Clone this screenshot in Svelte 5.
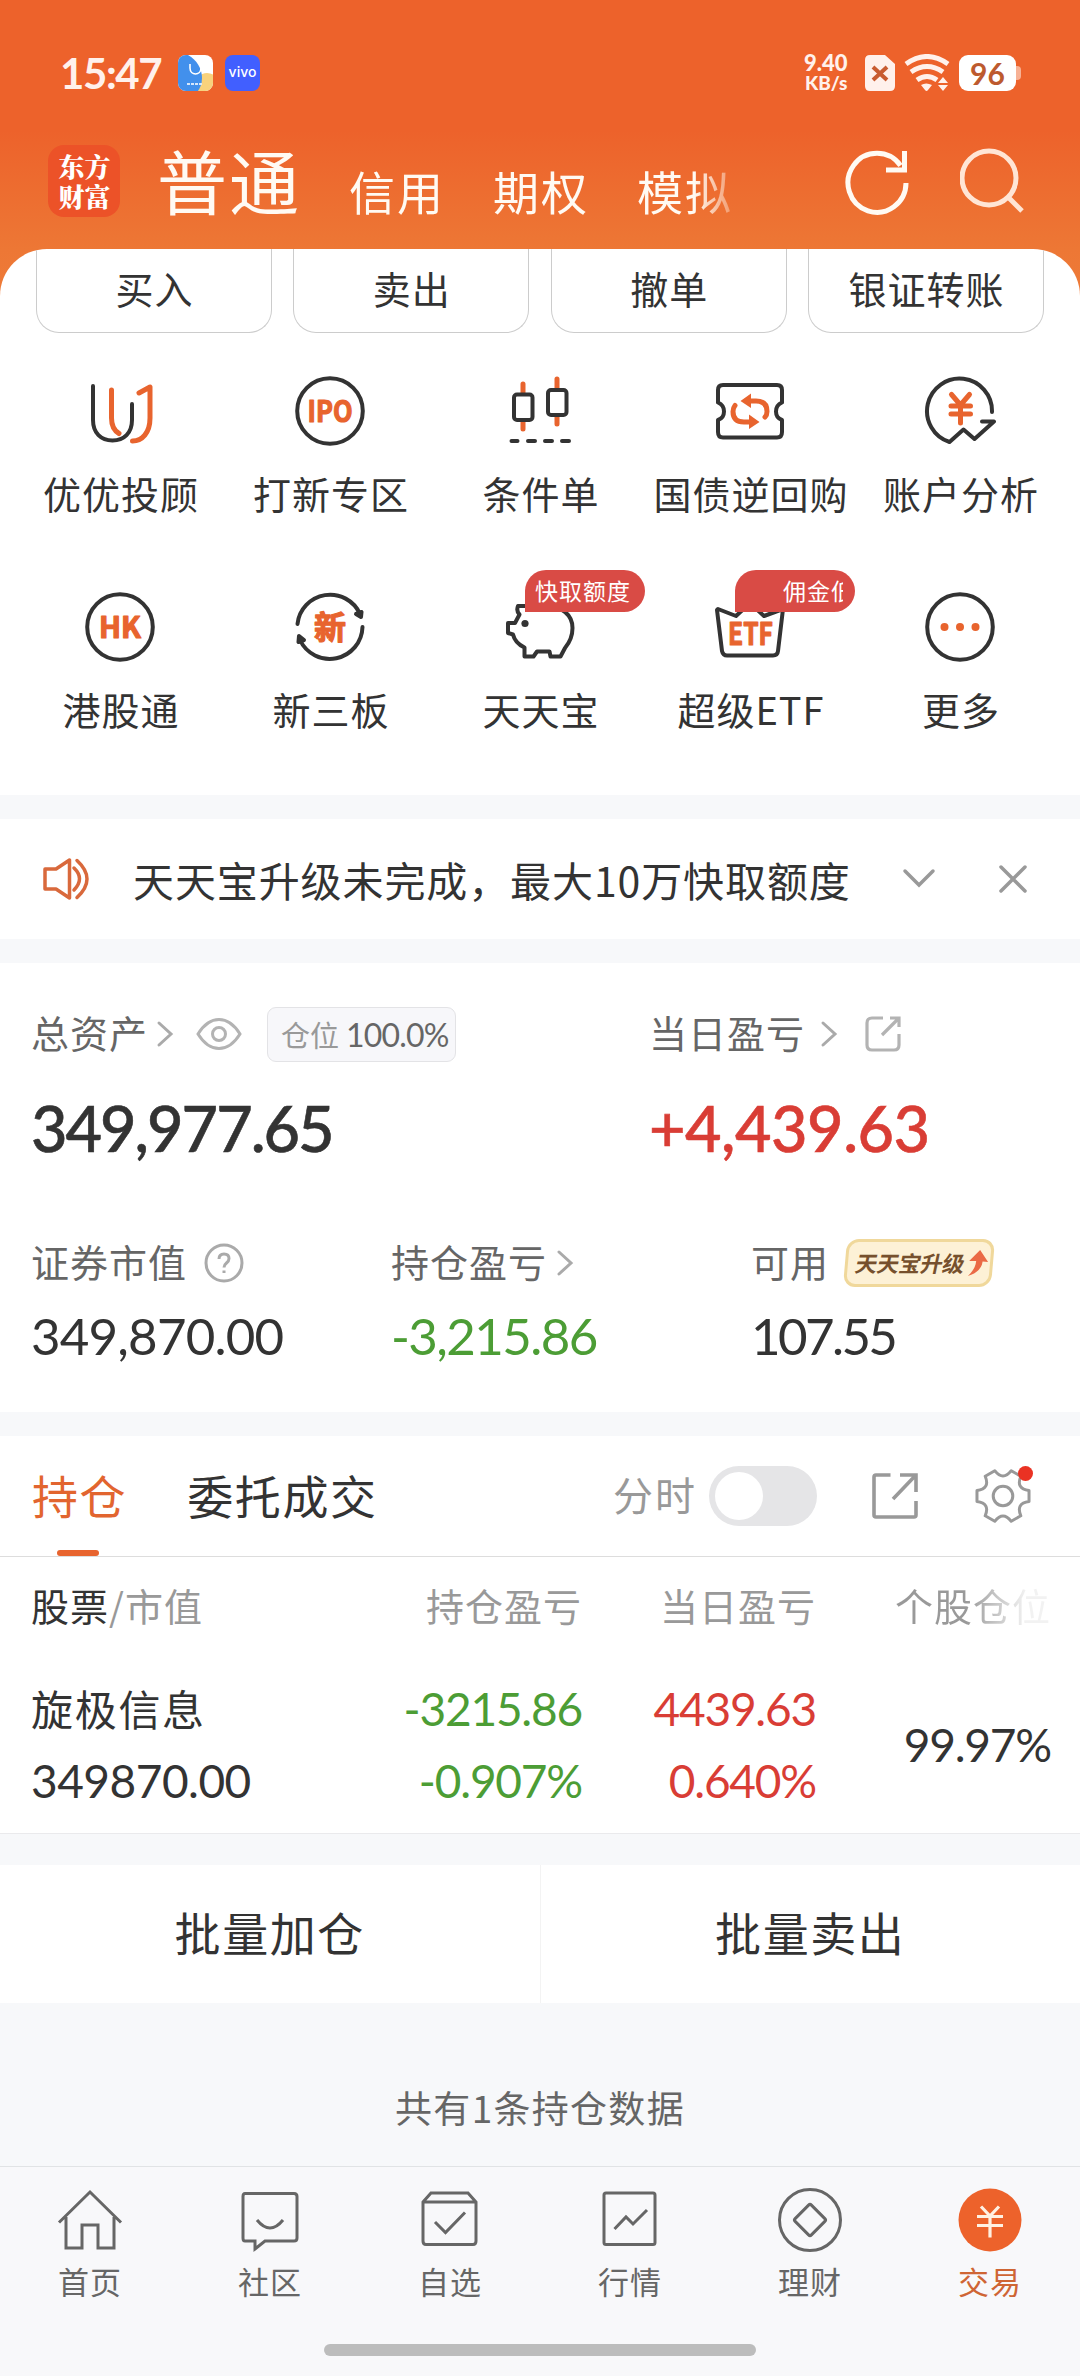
<script>
  const accounts = ['信用', '期权', '模拟'];
  const actions = ['买入', '卖出', '撤单', '银证转账'];

  const shortcuts = [
    { icon: 'youyou', label: '优优投顾' },
    { icon: 'ipo', label: '打新专区' },
    { icon: 'candle', label: '条件单' },
    { icon: 'repo', label: '国债逆回购' },
    { icon: 'analysis', label: '账户分析' },
    { icon: 'hk', label: '港股通' },
    { icon: 'neeq', label: '新三板' },
    { icon: 'pig', label: '天天宝', badge: '快取额度' },
    { icon: 'etf', label: '超级ETF', badge: '佣金低', scrolling: true },
    { icon: 'more', label: '更多' }
  ];

  const navItems = [
    { icon: 'home', label: '首页' },
    { icon: 'chat', label: '社区' },
    { icon: 'box', label: '自选' },
    { icon: 'quote', label: '行情' },
    { icon: 'wealth', label: '理财' },
    { icon: 'trade', label: '交易' }
  ];

  let intraday = $state(false);
  let active = $state('trade');

  function polar(r, deg) {
    const a = (deg * Math.PI) / 180;
    return `${(28 + r * Math.cos(a)).toFixed(2)} ${(28 + r * Math.sin(a)).toFixed(2)}`;
  }

  // six-lobed gear outline
  const gear = [0, 60, 120, 180, 240, 300]
    .map((d, i) => `${i ? 'L' : 'M'}${polar(26.6, d - 12)}L${polar(26.6, d + 12)}Q${polar(14.5, d + 30)} ${polar(26.6, d + 48)}`)
    .join('') + 'Z';
</script>

{#snippet chevron()}
  <svg class="chev" width="18" height="28" viewBox="0 0 18 28"><path d="M3 3l12 11L3 25" /></svg>
{/snippet}

<div class="app">
  <header>
    <div class="status">
      <span class="time">15:47</span>
      <svg class="app-ico" width="35" height="36" viewBox="0 0 35 36">
        <clipPath id="r"><rect width="35" height="36" rx="8" /></clipPath>
        <g clip-path="url(#r)">
          <rect width="35" height="36" fill="#fff" />
          <circle cx="29" cy="30" r="12" fill="#f8d27c" />
          <path d="M0 0H10C19 5 24 14 24 23C24 29 22 33 20 36H0Z" fill="#4290ec" />
          <path d="M12 9v4c0 8 11 8 11 0V9" fill="none" stroke="#fff" stroke-width="1.6" />
          <path d="M9 29h15" stroke="#d6e7fb" stroke-width="2" stroke-dasharray="3 1" />
        </g>
      </svg>
      <span class="vivo">vivo</span>
      <span class="speed">9.40<small>KB/s</small></span>
      <svg class="sim" width="30" height="36" viewBox="0 0 30 36">
        <path d="M5 0H20L30 9V31Q30 36 25 36H5Q0 36 0 31V5Q0 0 5 0Z" fill="#fff1ec" />
        <path d="M8 12l14 13M22 12L8 25" stroke="#c85c31" stroke-width="4" />
      </svg>
      <svg class="wifi" width="46" height="38" viewBox="0 0 46 38">
        <g fill="none" stroke="#fff1ec" stroke-width="5">
          <path d="M2 10Q23 -5 44 10" /><path d="M7 18Q23 7 39 18" /><path d="M13 26Q23 19 33 26" />
        </g>
        <path d="M17 31Q22 28 28 31L24 36Q22.500 38 21 36Z" fill="#fff1ec" />
        <path d="M34 29l5-6 5 6zM34 31l5 6 5-6z" fill="#fff1ec" />
      </svg>
      <span class="battery">96</span><i class="nub"></i>
    </div>
    <div class="head-row">
      <div class="logo"><span>东方</span><span>财富</span></div>
      <div class="accounts">
        <b>普通</b>
        {#each accounts as a}<span>{a}</span>{/each}
      </div>
      <svg class="refresh" width="66" height="68" viewBox="0 0 66 68"><path d="M62 36A29 29.500 0 1 1 56.500 18.500M60.500 4V23H42" /></svg>
      <svg class="search" width="66" height="68" viewBox="0 0 66 68"><circle cx="29" cy="31" r="27" /><path d="M48 50l14 14" /></svg>
    </div>
  </header>

  <div class="panel-wrap">
    <section class="panel">
      <div class="actions">
        {#each actions as a}<button>{a}</button>{/each}
      </div>
      <div class="grid">
        {#each shortcuts as s}
          <div class="cell">
            <svg class="ico" width="72" height="72" viewBox="0 0 72 72">
              {#if s.icon === 'youyou'}
                <path d="M9 11V45C9 58 17 65.500 28.500 65.500S48 58 48 45V29" />
                <path class="o" d="M27.500 15V43Q27.500 54 35 58.500M55 18L66 12V43C66 58 58 66 48.500 66" />
              {:else if s.icon === 'ipo'}
                <circle cx="36" cy="36" r="32.800" /><text x="36" y="47" textLength="45" lengthAdjust="spacingAndGlyphs" font-size="29">IPO</text>
              {:else if s.icon === 'candle'}
                <path class="o" d="M19 9V18M19 46V54M53 4V14M53 41V49" />
                <rect x="10" y="19.500" width="18.500" height="25.500" rx="3" /><rect x="44" y="15" width="18.500" height="25" rx="3" />
                <path d="M7.500 66h6M24 66h7M41 66h7M58 66h7" />
              {:else if s.icon === 'repo'}
                <path d="M9 10H63Q68 10 68 15V27.500Q62 30 62 36.500T68 45V57Q68 62.500 63 62.500H9Q4 62.500 4 57V45Q10 43 10 36.500T4 27.500V15Q4 10 9 10Z" />
                <path class="o" d="M34 26H42Q53 26 53 36.500Q53 40 51 42M38 47H30Q19 47 19 36.500Q19 33 21 30.500" />
                <path class="of" d="M26.500 26L37 18.500V33ZM45.500 47L35 39.500V54Z" />
              {:else if s.icon === 'analysis'}
                <path d="M68 37A32.500 32.500 0 1 0 25.500 67L39.500 54.500L50.500 64L70 46.500H58" />
                <path class="o" d="M27.500 19.500L36.500 30L45.500 19.500M36.500 31V48M27 31H46.500M27 39H46.500" />
              {:else if s.icon === 'hk'}
                <circle cx="36" cy="36" r="32.800" /><text x="36" y="47" textLength="42" lengthAdjust="spacingAndGlyphs" font-size="29">HK</text>
              {:else if s.icon === 'neeq'}
                <path d="M3.500 33A32.800 32.800 0 0 1 66 23M68.500 36A32.800 32.800 0 0 1 6 49" />
                <path d="M62 23L67.500 21L67 26ZM10 49L4.500 51L5 45Z" fill="#333" />
                <text x="36" y="47.500" font-size="32">新</text>
              {:else if s.icon === 'pig'}
                <path d="M24 15H14Q12 20 15.500 23.500L11 32H4V42L9 43.500Q11 52 20.500 56.500V65.500H29.500L33 60.500H45.500L46.500 65.500H56.500L61 57Q68.500 48 68.500 37C68.500 24 58 15 42 15Z" />
                <circle class="kf" cx="21" cy="32.500" r="3.600" />
              {:else if s.icon === 'etf'}
                <path d="M4 18L22 25L36 12L50 25L69 18L64 60Q63.500 64.500 59 64.500H13Q9 64.500 8 60L3 19Z" />
                <text x="36.500" y="53.500" textLength="45" lengthAdjust="spacingAndGlyphs" font-size="31">ETF</text>
              {:else}
                <circle cx="36" cy="36" r="32.800" />
                <g class="of"><circle cx="20.500" cy="36" r="4" /><circle cx="36" cy="36" r="4" /><circle cx="51.500" cy="36" r="4" /></g>
              {/if}
            </svg>
            <span class="label">{s.label}</span>
            {#if s.badge}<div class="badge"><span class:scrolling={s.scrolling}>{s.badge}</span></div>{/if}
          </div>
        {/each}
      </div>
    </section>
  </div>

  <section class="notice">
    <svg class="speaker" width="48" height="44" viewBox="0 0 48 44"><path d="M2 12H13L26.500 3V41L13 32H2ZM31 11Q42 21.500 31 33M34 3.500Q54 22 34 40.500" /></svg>
    <span class="notice-text">天天宝升级未完成，最大10万快取额度</span>
    <svg class="gray down" width="34" height="22" viewBox="0 0 34 22"><path d="M3 3l14 14L31 3" /></svg>
    <svg class="gray" width="28" height="30" viewBox="0 0 28 30"><path d="M2 3l24 24M26 3L2 27" /></svg>
  </section>

  <section class="assets">
    <div class="top">
      <div class="total">
        <div class="line">
          <span>总资产</span>{@render chevron()}
          <svg class="eye" width="46" height="34" viewBox="0 0 46 34"><path d="M2 17Q11 2.500 23 2.500T44 17Q35 31.500 23 31.500T2 17Z" /><circle cx="23" cy="17" r="6.500" /></svg>
          <div class="chip"><em>仓位</em>100.0%</div>
        </div>
        <div class="big">349,977.65</div>
      </div>
      <div>
        <div class="line">
          <span>当日盈亏</span>{@render chevron()}
          <svg class="share-sm" width="36" height="36" viewBox="0 0 36 36"><path d="M18 2H7Q2 2 2 7V29Q2 34 7 34H29Q34 34 34 29V18M25 2H34V11M33 3L17 19" /></svg>
        </div>
        <div class="big up">+4,439.63</div>
      </div>
    </div>
    <div class="sub">
      <div>
        <div class="line"><span>证券市值</span>
          <svg class="help" width="40" height="40" viewBox="0 0 40 40"><circle cx="20" cy="20" r="18" /><path d="M15 16Q15 11 20 11T25 15.500Q25 18 22.500 20T20 24.500M20 27.500V30" /></svg>
        </div>
        <div class="mid">349,870.00</div>
      </div>
      <div>
        <div class="line"><span>持仓盈亏</span>{@render chevron()}</div>
        <div class="mid tight down-c">-3,215.86</div>
      </div>
      <div>
        <div class="line"><span>可用</span>
          <div class="promo"><b>天天宝升级</b>
            <svg width="20" height="26" viewBox="0 0 20 26"><path d="M11 0L20 12L14.500 11.500Q14 22 1 26Q8 19 8 11L1 11Z" fill="#ea6a46" /></svg>
          </div>
        </div>
        <div class="mid tighter">107.55</div>
      </div>
    </div>
  </section>

  <section class="holdings">
    <div class="tabs">
      <span class="tab on">持仓</span>
      <span class="tab">委托成交</span>
      <span class="min">分时</span>
      <button class="toggle" class:checked={intraday} aria-label="分时" onclick={() => intraday = !intraday}></button>
      <svg class="share" width="48" height="48" viewBox="0 0 48 48"><path d="M19.500 3H5Q3 3 3 5V43Q3 45 5 45H43Q45 45 45 43V29M29 3H45V20M44 4L22 27" /></svg>
      <div class="gear">
        <svg width="56" height="56" viewBox="0 0 56 56"><path d={gear} /><circle cx="28" cy="28" r="9.800" /></svg>
        <i></i>
      </div>
    </div>
    <div class="row th">
      <span class="left"><em>股票</em>/市值</span><span>持仓盈亏</span><span>当日盈亏</span><span class="fade">个股仓位</span>
    </div>
    <div class="row td">
      <div class="left"><p class="name">旋极信息</p><p>349870.00</p></div>
      <div class="down-c"><p>-3215.86</p><p>-0.907%</p></div>
      <div class="up"><p>4439.63</p><p>0.640%</p></div>
      <div><p>99.97%</p></div>
    </div>
  </section>

  <div class="batch"><button>批量加仓</button><button>批量卖出</button></div>
  <div class="count">共有1条持仓数据</div>

  <nav>
    <div class="nav-items">
      {#each navItems as n}
        <button class="nav-item" class:active={active === n.icon} onclick={() => active = n.icon}>
          <svg width="66" height="66" viewBox="0 0 66 66">
            {#if n.icon === 'home'}
              <path d="M2 34.500L33 4L64 34.500M9 29V60H25V37H41V60H57V29" />
            {:else if n.icon === 'chat'}
              <path d="M8 5.500H57Q60 5.500 60 8.500V50Q60 53 57 53H28L18 61V53H8Q6 53 6 50V8.500Q6 5.500 8 5.500ZM20 32Q33 48 46 32" />
            {:else if n.icon === 'box'}
              <path d="M6 14L14 5H51L59 14V53Q59 56.500 56 56.500H9Q6 56.500 6 53ZM6 14H59M18 34L28.500 44.500L48 24.500" />
            {:else if n.icon === 'quote'}
              <rect x="7" y="5" width="51" height="51.500" rx="2" /><path d="M17.500 41L29 29L36 36L50 22" />
            {:else if n.icon === 'wealth'}
              <circle cx="33" cy="32" r="30.500" /><rect x="21.500" y="20.500" width="23" height="23" rx="2" transform="rotate(45 33 32)" />
            {:else}
              <circle cx="33" cy="32" r="31.500" fill="#ed622b" stroke="none" />
              <path class="yen" d="M24 18.500L33 28L42 18.500M33 28V49.500M20 28.500H46M20 37.500H46" />
            {/if}
          </svg>
          <span>{n.label}</span>
        </button>
      {/each}
    </div>
    <div class="home-bar"></div>
  </nav>
</div>

<style>
  :global(body) { margin: 0; background: #f7f8fa; }
  .app { width: 1080px; height: 2376px; overflow: hidden; display: flex; flex-direction: column; background: #f7f8fa; color: #333; font-family: "Noto Sans CJK SC", sans-serif; font-size: 38px; letter-spacing: 1px; font-weight: 400; }
  .app > * { flex-shrink: 0; box-sizing: border-box; }
  button { font: inherit; letter-spacing: inherit; color: inherit; background: none; border: none; padding: 0; }
  svg { display: block; flex-shrink: 0; fill: none; }
  p { margin: 0; }
  .up { color: #d93d35; }
  .down-c { color: #4c9d35; }

  header { height: 249px; background: linear-gradient(#ed622b 0, #ed622b 130px, #ed7735 249px); color: #fffaf3; }
  .status { display: flex; align-items: center; height: 36px; padding: 55px 60px 0; }
  .time { width: 118px; font: 700 42px/36px Lato, sans-serif; letter-spacing: -1.4px; color: #fff1ec; }
  .vivo { width: 35px; height: 36px; margin-left: 12px; border-radius: 8px; background: #415fff; color: #fff; font: 500 14px/34px Inter, sans-serif; letter-spacing: 0; text-align: center; }
  .speed { width: 60px; margin-left: auto; margin-right: 1px; text-align: left; font: 900 22px/20px Lato, sans-serif; letter-spacing: 0; color: #fff1ec; }
  .speed small { display: block; font-size: 19px; font-weight: 900; padding-left: 1px; }
  .wifi { margin: 0 9px; }
  .battery { width: 57px; height: 36px; border-radius: 9px; background: #fff; color: #bd5a2e; font: 700 30px/36px Lato, sans-serif; letter-spacing: 0; text-align: center; }
  .nub { width: 5px; height: 14px; background: #f7b195; border-radius: 0 4px 4px 0; margin-right: -1px; }
  .head-row { display: flex; align-items: flex-start; padding: 54px 54px 0 48px; }
  .logo { width: 72px; height: 72px; box-sizing: border-box; padding: 6px 0 0 1px; border-radius: 16px; background: #ec5228; color: #fff; display: flex; flex-direction: column; align-items: center; font: 900 26px/30px "Noto Serif CJK SC", "Noto Sans CJK SC", serif; letter-spacing: 0; }
  .accounts { width: 640px; height: 90px; margin-left: 37px; display: flex; align-items: baseline; white-space: nowrap; -webkit-mask-image: linear-gradient(90deg, #000 537px, transparent 592px); mask-image: linear-gradient(90deg, #000 537px, transparent 592px); }
  .accounts b { font-weight: 400; font-size: 70px; line-height: 70px; letter-spacing: 2px; width: 143px; }
  .accounts span { font-size: 46px; line-height: 68px; letter-spacing: 2px; width: 96px; margin-left: 48px; }
  .accounts b + span { margin-left: 49px; }
  .refresh { margin-left: 47px; margin-top: 2px; stroke: #fffaf3; stroke-width: 5; }
  .search { margin-left: auto; margin-top: 2px; stroke: #ffe5d5; stroke-width: 5; }

  .panel-wrap { background: linear-gradient(#ed7735, #ee7b38 50px, #fff 50px); }
  .panel { height: 546px; background: #fff; border-radius: 47px 47px 0 0; overflow: hidden; }
  .actions { display: grid; grid-template-columns: repeat(4, 236px); justify-content: space-between; padding: 0 36px; }
  .actions button { height: 84px; box-sizing: border-box; border: 1px solid #ccc; border-top: none; border-radius: 0 0 23px 23px; padding: 0 0 5px 1px; line-height: 70px; }
  .grid { display: grid; grid-template-columns: repeat(5, 210px); grid-template-rows: 216px 204px; padding: 42px 15px 0; }
  .cell { position: relative; display: flex; flex-direction: column; align-items: center; }
  .ico { stroke: #333; stroke-width: 4; stroke-linecap: round; stroke-linejoin: round; }
  .ico .o { stroke: #e8642e; stroke-width: 5; }
  .ico .of { fill: #e8642e; stroke: none; }
  .ico .kf { fill: #333; stroke: none; }
  .ico text { fill: #e8642e; stroke: #e8642e; stroke-width: 1.2; font-family: "Noto Sans CJK SC", sans-serif; font-weight: 700; text-anchor: middle; letter-spacing: 0; }
  .label { margin: 22px 0 0 2px; line-height: 48px; white-space: nowrap; }
  .badge { position: absolute; left: 90px; top: -21px; width: 120px; height: 42px; box-sizing: border-box; padding: 0 12px 0 10px; border-radius: 21px 21px 21px 0; background: #d94b45; color: #fff; font-size: 23px; line-height: 40px; letter-spacing: 1px; white-space: nowrap; }
  .badge span { display: block; overflow: hidden; }
  .badge .scrolling { padding-left: 38px; }

  .notice { height: 120px; margin: 24px 0; padding: 0 53px 0 43px; background: #fff; display: flex; align-items: center; }
  .speaker { stroke: #d9693c; stroke-width: 3.5; stroke-linejoin: round; stroke-linecap: round; }
  .notice-text { margin-left: 42px; width: 769px; font-size: 41px; line-height: 60px; letter-spacing: 0.9px; white-space: nowrap; }
  .gray { stroke: #999; stroke-width: 3.5; stroke-linecap: round; }
  .gray.down { margin-right: auto; }

  .assets { height: 449px; padding: 41px 0 0 31px; background: #fff; }
  .line { display: flex; align-items: center; height: 60px; color: #666; white-space: nowrap; }
  .line span { line-height: 56px; height: 60px; }
  .chev { stroke: #aaa; stroke-width: 3; stroke-linecap: round; margin-left: 8px; }
  .eye { stroke: #b3b3b3; stroke-width: 3; margin-left: 22px; }
  .chip { height: 55px; width: 189px; box-sizing: border-box; margin-left: 25px; padding-left: 13px; border: 1px solid #e3e3e6; border-radius: 9px; background: #f7f7fa; font: 400 32px/53px Lato, sans-serif; letter-spacing: -0.8px; }
  .chip em { font: 400 29px/51px "Noto Sans CJK SC", sans-serif; letter-spacing: 0; color: #999; margin-right: 7px; }
  .share-sm { stroke: #b3b3b3; stroke-width: 3.2; margin-left: 27px; }
  .top { display: flex; }
  .total { width: 618px; }
  .top > div:last-child .chev { margin-left: 15px; }
  .big { font: 500 63px/76px Lato, sans-serif; letter-spacing: -2px; margin-top: 26px; -webkit-text-stroke: 0.6px currentColor; }
  .big.up { letter-spacing: -0.5px; }
  .sub { display: grid; grid-template-columns: 360px 360px 1fr; margin-top: 67px; }
  .sub .chev { margin-left: 9px; }
  .help { stroke: #aaa; stroke-width: 3; margin-left: 17px; }
  .mid { font: 400 51px/60px Lato, sans-serif; letter-spacing: -0.8px; margin-top: 13px; }
  .mid.tight { letter-spacing: -1.6px; }
  .mid.tighter { letter-spacing: -2.6px; }
  .promo { display: flex; align-items: center; height: 48px; width: 148px; box-sizing: border-box; padding-left: 8px; margin-left: 16px; border: 3px solid #f0d89b; border-radius: 12px; background: #fdf1d6; transform: skewX(-5deg); color: #76502d; font-size: 22px; letter-spacing: -0.3px; }
  .promo b { transform: skewX(-7deg); line-height: 40px; padding-bottom: 2px; }
  .promo svg { margin-left: 3px; }

  .holdings { height: 398px; margin-top: 24px; background: #fff; border-bottom: 1px solid #eaeaec; }
  .tabs { height: 121px; box-sizing: border-box; display: flex; align-items: center; padding: 0 49px 0 32px; border-bottom: 1px solid #ddd; }
  .tab { position: relative; height: 120px; font-size: 46px; line-height: 116px; letter-spacing: 1.6px; }
  .tab + .tab { margin-left: 60px; }
  .tab.on { color: #e2652f; }
  .tab.on::after { content: ''; position: absolute; left: 25px; bottom: 0; width: 42px; height: 6px; border-radius: 3px; background: #e8642e; }
  .min { margin-left: auto; margin-right: 12px; height: 120px; font-size: 40px; line-height: 117px; letter-spacing: 2px; color: #999; }
  .toggle { width: 108px; height: 60px; border-radius: 30px; background: #e5e5e7; padding: 6px; }
  .toggle::before { content: ''; display: block; width: 48px; height: 48px; border-radius: 50%; background: #fff; }
  .toggle.checked { background: #e8642e; }
  .toggle.checked::before { margin-left: auto; }
  .share { stroke: #999; stroke-width: 3.6; margin-left: 54px; }
  .gear { position: relative; margin-left: 56px; }
  .gear svg { stroke: #999; stroke-width: 3; stroke-linejoin: round; }
  .gear i { position: absolute; right: -2px; top: -2px; width: 15px; height: 15px; border-radius: 50%; background: #ea3223; }
  .row { display: grid; grid-template-columns: 300px 251px 234px 235px; padding-left: 31px; text-align: right; white-space: nowrap; }
  .row .left { text-align: left; }
  .th { height: 100px; line-height: 96px; color: #999; }
  .th em { font-style: normal; color: #333; }
  .th .fade { background: linear-gradient(90deg, #999 150px, #f2f2f2 210px); -webkit-background-clip: text; background-clip: text; color: transparent; }
  .td { align-items: center; font: 400 46px/72px Lato, sans-serif; letter-spacing: -1.2px; padding-top: 16px; }
  .td .left { letter-spacing: -0.5px; }
  .td .name { font: 400 42px/70px "Noto Sans CJK SC", sans-serif; letter-spacing: 1.7px; }
  .td p { height: 72px; }

  .batch { height: 138px; margin-top: 31px; display: flex; background: #fff; }
  .batch button { flex: 1; font-size: 46px; letter-spacing: 1.6px; padding-bottom: 6px; }
  .batch button + button { border-left: 1px solid #f3f3f3; }
  .count { height: 163px; padding-top: 77px; line-height: 54px; text-align: center; color: #666; font-size: 37px; letter-spacing: 1.3px; }

  nav { height: 211px; border-top: 1px solid #e1e3e5; background: #f8f8fa; }
  .nav-items { display: grid; grid-template-columns: repeat(6, 1fr); height: 176px; }
  .nav-item { display: flex; flex-direction: column; align-items: center; padding-top: 21px; color: #666; font-size: 31px; letter-spacing: 1px; line-height: 46px; }
  .nav-item span { margin-top: 4px; }
  .nav-item svg { stroke: #666; stroke-width: 3; }
  .nav-item .yen { stroke: #fff0e2; stroke-width: 3.2; }
  .nav-item.active { color: #cf6534; }
  .home-bar { width: 432px; height: 12px; margin: 1px auto 0; border-radius: 6px; background: #bcbcbc; }
</style>
